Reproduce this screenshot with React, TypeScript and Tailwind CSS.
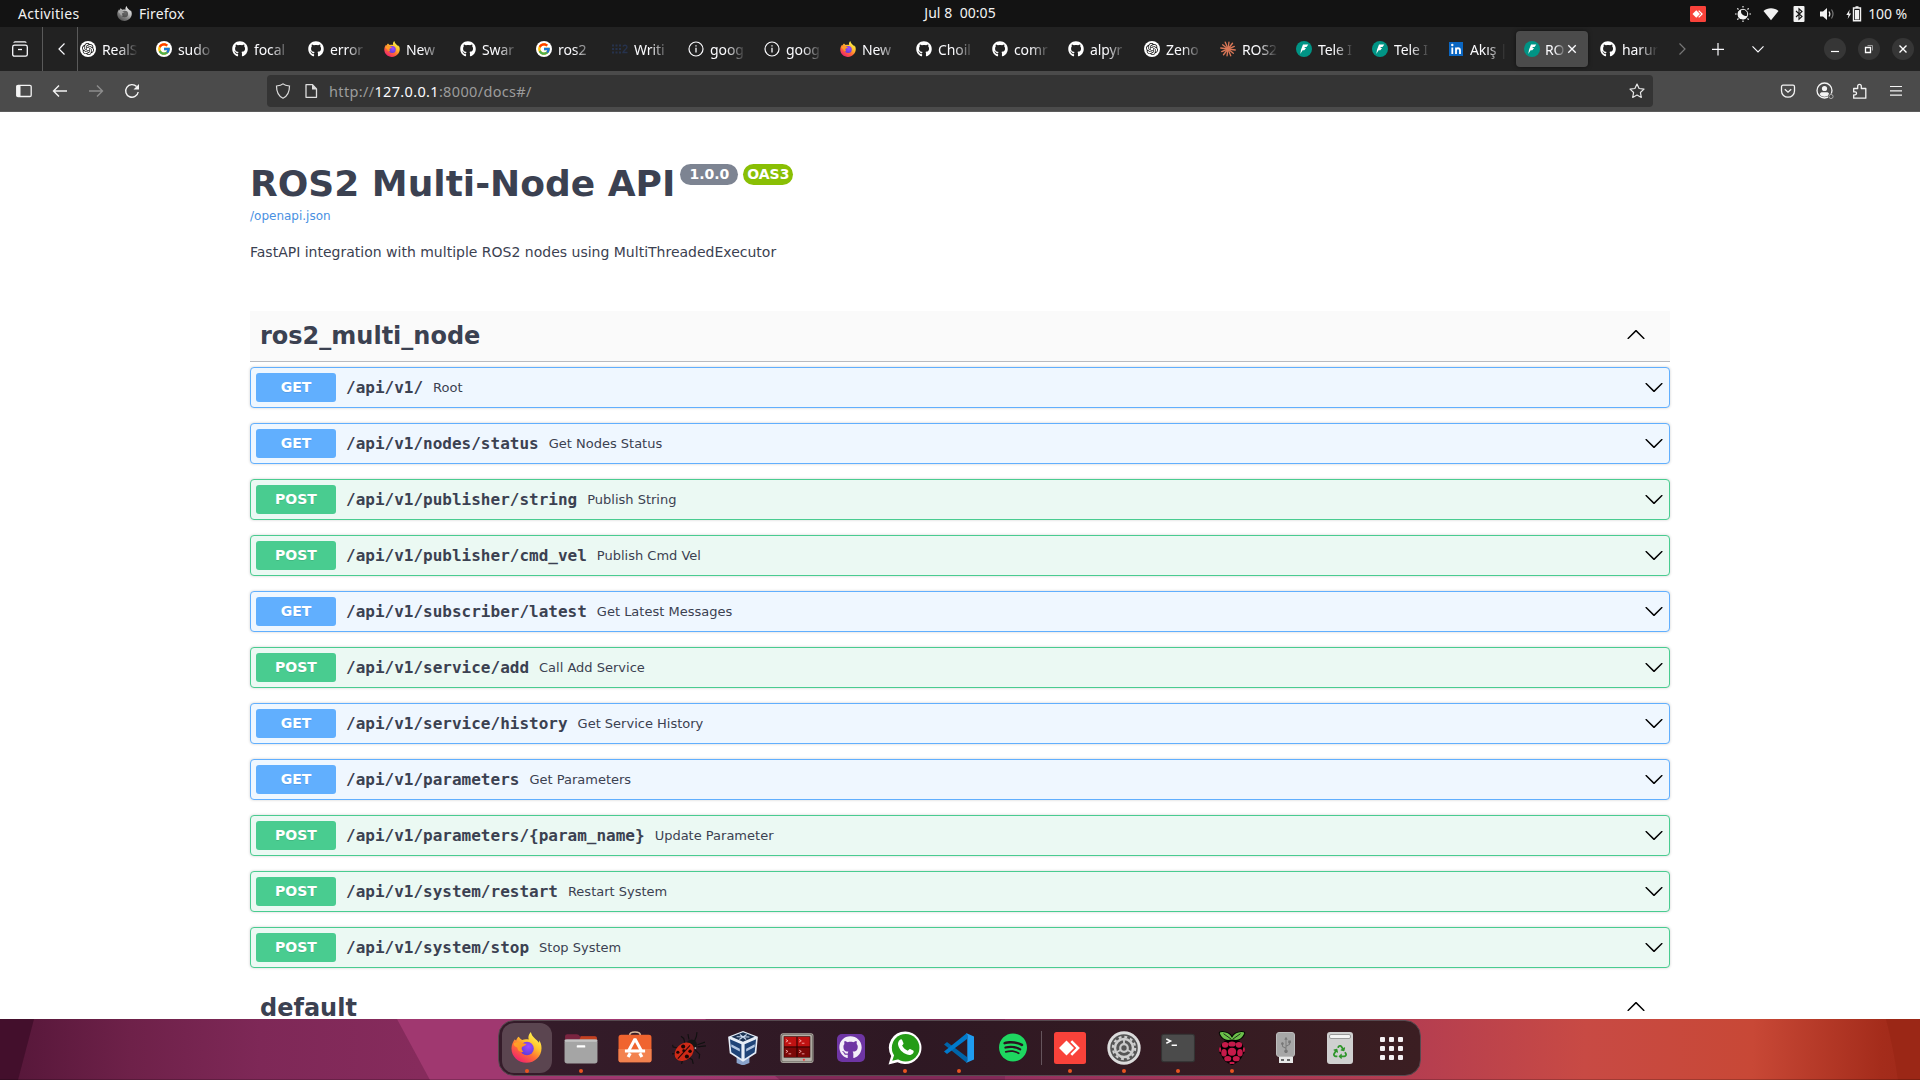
import React from "react";
import { FcGoogle } from "react-icons/fc";
import { FaGithub, FaRecycle, FaUsb } from "react-icons/fa";
import { SiOpenai, SiSpotify } from "react-icons/si";

type Kid = { children?: React.ReactNode };

const Svg = ({ s = 16, box = 16, className = "", children }: Kid & { s?: number; box?: number; className?: string }) => (
  <svg width={s} height={s} viewBox={`0 0 ${box} ${box}`} fill="none" className={`shrink-0 ${className}`}>
    {children}
  </svg>
);

/* ---------- logos ---------- */

const Firefox = ({ s, id, gray = false }: { s: number; id: string; gray?: boolean }) => (
  <Svg s={s} box={32} className={gray ? "grayscale" : ""}>
    <defs>
      <linearGradient id={`${id}a`} x1="26" y1="3" x2="8" y2="30" gradientUnits="userSpaceOnUse">
        <stop offset="0" stopColor="#fff44f" />
        <stop offset=".35" stopColor="#ffc02c" />
        <stop offset=".65" stopColor="#ff6a36" />
        <stop offset="1" stopColor="#f0256c" />
      </linearGradient>
      <radialGradient id={`${id}b`} cx=".6" cy=".35" r=".7">
        <stop offset="0" stopColor="#a04bff" />
        <stop offset="1" stopColor="#5a3bd8" />
      </radialGradient>
      <linearGradient id={`${id}c`} x1="4" y1="8" x2="18" y2="20" gradientUnits="userSpaceOnUse">
        <stop offset="0" stopColor="#ffa52b" />
        <stop offset="1" stopColor="#ff8a1c" />
      </linearGradient>
    </defs>
    <path d="M20.500 0c-2.600 2.800-3 5.500-2.200 7.800-2.500-.6-4.800-.4-6.800.4C10 7.300 8.600 6.200 8 5 6.800 5.700 5.900 7 5.300 8.800 4.600 8.500 4.200 8 4 7.500 2.300 9.800 .5 13.300 .5 17 .5 25.300 7.500 31.800 16 31.800S31.500 25 31.500 16.700c0-3.400-1-6.300-2.600-8.200.2 1 .2 1.800 0 2.600C26.500 7.500 21.500 5.500 20.500 0z" fill={`url(#${id}a)`} />
    <circle cx="16.500" cy="17" r="7" fill={`url(#${id}b)`} />
    <path d="M2.500 12c2-1.500 6-2.500 9-1 1.200.8 3 1 4.500 1-.6 2.300-3.800 2.300-4.600 3.500-.9 1.300-.4 3.500 1.300 4.800-3.300 1-6-1-6.200-4.300-1.500-.8-3-1-4-4z" fill={`url(#${id}c)`} />
  </Svg>
);

const OpenAiTab = () => (
  <span className="flex size-4 items-center justify-center rounded-full bg-white text-[#111]">
    <SiOpenai size={12} />
  </span>
);

const GoogleTab = () => (
  <span className="flex size-4 items-center justify-center rounded-full bg-white">
    <FcGoogle size={14} />
  </span>
);

const Fast = () => (
  <Svg>
    <circle cx="8" cy="8" r="8" fill="#009485" />
    <path d="M7 3.500h5.300L10.500 6H8.800l-.3.900h1.600L8.300 9.300H6.600L4.300 13 5 8.800z" fill="#fff" />
  </Svg>
);

const Claude = () => (
  <Svg>
    <g stroke="#d97757" strokeWidth="1.350" strokeLinecap="round">
      {Array.from({ length: 12 }, (_, i) => (
        <line key={i} x1="8" y1="8" x2="8" y2={i % 2 ? 0.7 : 1.2} transform={`rotate(${i * 30 + 8} 8 8)`} />
      ))}
    </g>
  </Svg>
);

const Info = () => (
  <Svg>
    <circle cx="8" cy="8" r="7" stroke="#fbfbfe" strokeWidth="1.200" />
    <path d="M8 6.800v4.700M8 4.200v1.300" stroke="#fbfbfe" strokeWidth="1.300" />
  </Svg>
);

const LinkedIn = () => (
  <Svg>
    <rect x="1" y="1" width="14" height="14" fill="#0a66c2" />
    <path d="M4.300 6.500V13M8 13V6.500M8 13V9.500c0-3 4-3 4 0V13" stroke="#fff" strokeWidth="1.800" />
    <circle cx="4.300" cy="4" r="1.200" fill="#fff" />
  </Svg>
);

const Ros = () => (
  <Svg>
    <g fill="#26324c">
      {[0, 3.5, 7].map((x) => [3.5, 7, 10.5].map((y) => <rect key={`${x}-${y}`} x={x} y={y} width="2" height="2" />))}
    </g>
    <path d="M11 5.500c.4-1.800 4-1.800 4 .4 0 2-3.500 3.300-4 5.600h4.500" stroke="#26324c" strokeWidth="1.400" />
  </Svg>
);

const AnyDesk = ({ s }: { s: number }) => (
  <Svg s={s} box={32}>
    <rect width="32" height="32" rx="2.500" fill="#f9423a" />
    <path d="M12.500 8.500 20 16l-7.500 7.500L5 16z" fill="#fff" />
    <path d="m18.200 8.300 7.700 7.700-7.700 7.700-1.800-1.800 5.900-5.900-5.900-5.900z" fill="#fff" />
  </Svg>
);

/* ---------- system bar ---------- */

const TopBar = () => (
  <div className="flex h-[27px] items-center bg-[#131313] text-[14px] text-[#f2f2f2]">
    <div className="flex w-[462px] items-center pl-[18px]">
      <span className="w-[99px] tracking-[0.32px]">Activities</span>
      <Firefox s={15} id="ft" gray />
      <span className="ml-[7px] tracking-[0.1px]">Firefox</span>
    </div>
    <div className="flex flex-1 justify-center whitespace-pre pb-[2px]">
      <span className="tracking-[0.05px]">Jul 8  00:05</span>
    </div>
    <div className="flex w-[462px] items-center justify-end pr-[13px]">
      <span className="mr-[29px]"><AnyDesk s={16} /></span>
      <Svg className="mr-[12px]">
        <path d="M8 0v1.600M8 14.400V16M0 8h1.600M14.400 8H16M2.300 2.300l1.200 1.200M12.500 12.500l1.200 1.200M2.300 13.700l1.200-1.200M12.500 3.500l1.200-1.200" stroke="#f2f2f2" strokeWidth="1.200" />
        <circle cx="8" cy="8" r="4.700" stroke="#f2f2f2" />
        <path d="M6.500 3.500A5 5 0 1 0 12.500 9.500 4.500 4.500 0 0 1 6.500 3.500z" fill="#f2f2f2" />
      </Svg>
      <Svg className="mr-[12px]"><path d="M8 14.300.5 5C4.500 1.300 11.500 1.300 15.500 5z" fill="#f2f2f2" /></Svg>
      <Svg className="mr-[12px]">
        <rect x="2.500" width="11" height="16" rx="1" fill="#f2f2f2" />
        <path d="m5 5 6 5.500-3 2.700V2.800L11 5.500 5 11" stroke="#131313" strokeWidth="1.100" />
      </Svg>
      <Svg className="mr-[11px]">
        <path d="M1 5.500h3L8 2v12l-4-3.500H1z" fill="#f2f2f2" />
        <path d="M10 5.500q1.700 2.500 0 5" stroke="#f2f2f2" strokeWidth="1.200" />
        <path d="M12.500 3.500q3 4.500 0 9" stroke="#777" strokeWidth="1.200" />
      </Svg>
      <Svg className="mr-[6px]">
        <path d="M3.700 3.500.3 9h2.200L1.700 13l3.400-5.500H3z" fill="#f2f2f2" />
        <path d="M7.500 2h7v12.800h-7zM9.500 1h3" stroke="#f2f2f2" strokeWidth="1.400" />
        <rect x="9" y="4" width="4" height="9.500" fill="#f2f2f2" />
      </Svg>
      <span className="tracking-[-0.1px]">100 %</span>
    </div>
  </div>
);

/* ---------- browser chrome ---------- */

const gh = <FaGithub size={16} color="#fff" />;
const tabs: [React.ReactNode, string][] = [
  [<OpenAiTab />, "RealS"],
  [<GoogleTab />, "sudo"],
  [gh, "focal"],
  [gh, "error"],
  [<Firefox s={16} id="f1" />, "New"],
  [gh, "Swar"],
  [<GoogleTab />, "ros2"],
  [<Ros />, "Writi"],
  [<Info />, "goog"],
  [<Info />, "goog"],
  [<Firefox s={16} id="f2" />, "New"],
  [gh, "Choil"],
  [gh, "comr"],
  [gh, "alpyr"],
  [<OpenAiTab />, "Zeno"],
  [<Claude />, "ROS2"],
  [<Fast />, "Tele I"],
  [<Fast />, "Tele I"],
  [<LinkedIn />, "Akış |"],
  [<Fast />, "RO"],
  [gh, "harur"],
];

const Fade = ({ children, className }: Kid & { className: string }) => (
  <span className={`whitespace-nowrap [mask-image:linear-gradient(to_right,#000_45%,transparent)] ${className}`}>{children}</span>
);

const TabBar = () => (
  <div className="flex h-11 items-center bg-[#222] text-[14px] text-[#fbfbfe]">
    <div className="flex h-full w-[43px] items-center justify-center border-r border-[#5a5a5a] pr-[2px]">
      <Svg>
        <path d="M2 1.800C2 1.200 2.400.9 3 .9h10c.6 0 1 .3 1 .9" stroke="#fbfbfe" strokeWidth="1.300" />
        <rect x=".7" y="4.200" width="14.600" height="11" rx="1.800" stroke="#fbfbfe" strokeWidth="1.300" />
        <path d="M6 8.500h4" stroke="#fbfbfe" strokeWidth="1.300" />
      </Svg>
    </div>
    <div className="flex h-full w-[35px] items-center justify-center border-r border-[#5a5a5a] pl-[3px]">
      <Svg><path d="M10.500 2.500 5 8l5.500 5.500" stroke="#fbfbfe" strokeWidth="1.200" /></Svg>
    </div>
    <div className="-ml-[6px] flex w-[1596px] gap-1">
      {tabs.map(([icon, t], i) => (
        <div key={i} className={`flex h-9 w-[72px] shrink-0 items-center rounded pl-2 ${i === 19 ? "bg-[#4b4b4b] shadow-[0_0_4px_rgba(0,0,0,0.5)]" : ""}`}>
          <span className="flex size-4 items-center justify-center">{icon}</span>
          <Fade className={`pt-[2px] leading-6 ${i === 19 ? "ml-[5px] w-[21px] tracking-[-0.2px]" : "ml-[6px] w-[36px] tracking-[-0.1px]"}`}>{t}</Fade>
          {i === 19 && <Svg s={12}><path d="m3 3 10 10M13 3 3 13" stroke="#fbfbfe" strokeWidth="1.800" /></Svg>}
        </div>
      ))}
    </div>
    <div className="flex w-[28px] justify-center"><Svg><path d="M5.500 2.500 11 8l-5.500 5.500" stroke="#777" strokeWidth="1.200" /></Svg></div>
    <div className="flex w-[44px] justify-center"><Svg><path d="M8 2v12.500M2 8.300h12" stroke="#fbfbfe" strokeWidth="1.200" /></Svg></div>
    <div className="flex w-[36px] justify-center"><Svg><path d="M2.500 5.300 8 10.800l5.500-5.500" stroke="#fbfbfe" strokeWidth="1.200" /></Svg></div>
    <div className="ml-auto flex gap-3 pr-[6px]">
      <span className="flex size-[22px] items-center justify-center rounded-full bg-[#363636]"><Svg><path d="M4 10.500h8" stroke="#fff" strokeWidth="1.200" /></Svg></span>
      <span className="flex size-[22px] items-center justify-center rounded-full bg-[#363636]">
        <Svg><path d="M4.500 6.500h5v5h-5z" stroke="#fff" strokeWidth="1.300" /><path d="M6.500 4.500h5v5" stroke="#999" /></Svg>
      </span>
      <span className="flex size-[22px] items-center justify-center rounded-full bg-[#363636]"><Svg><path d="m4.500 4.500 7 7M11.500 4.500l-7 7" stroke="#fff" strokeWidth="1.400" /></Svg></span>
    </div>
  </div>
);

const ink = "#f4f4f4";

const NavBar = () => (
  <div className="flex h-[41px] items-center border-b border-[#5c5c5c] bg-[#4b4b4b]">
    <div className="flex w-[267px] items-center gap-5 pl-4">
      <Svg><rect x=".8" y="2.300" width="14.400" height="11.200" rx="1.300" stroke={ink} strokeWidth="1.300" /><path d="M.5 2.500h4v11h-4z" fill={ink} /></Svg>
      <Svg><path d="M15 8H1.800M7 2.500 1.500 8 7 13.500" stroke={ink} strokeWidth="1.400" /></Svg>
      <Svg><path d="M1 8h13.200M9 2.500 14.500 8 9 13.500" stroke="#8d8d8d" strokeWidth="1.400" /></Svg>
      <Svg><path d="M14.200 9A6.300 6.300 0 1 1 12.600 3.600" stroke={ink} strokeWidth="1.400" /><path d="M15 1v5.500H9.500z" fill={ink} /></Svg>
    </div>
    <div className="flex h-8 w-[1386px] items-center rounded bg-[#343434] pl-2">
      <Svg><path d="M8 .9C6.500 2.200 4 2.800 1.500 3c0 5.500 1.500 10 6.500 12.200C13 13 14.500 8.500 14.500 3 12 2.800 9.500 2.200 8 .9z" stroke="#ddd" strokeWidth="1.200" /></Svg>
      <Svg className="ml-3"><path d="M3 1.700h6.500L13.500 6v8.300H3z" stroke="#ddd" strokeWidth="1.300" strokeLinejoin="round" /><path d="M9 1.500V6.500h5z" fill="#ddd" /></Svg>
      <span className="ml-[10px] pt-[2px] text-[14.500px] tracking-[0.34px] text-[#9c9c9c]">http://<span className="text-[#fbfbfe]">127.0.0.1</span>:8000/docs#/</span>
      <Svg className="ml-auto mr-2"><path d="m8 1 2.100 4.500 4.900.6-3.600 3.400.9 4.900L8 12l-4.300 2.400.9-4.900L1 6.100l4.900-.6z" stroke="#e8e8e8" strokeWidth="1.200" strokeLinejoin="round" /></Svg>
    </div>
    <div className="ml-auto flex items-center gap-5 pr-4">
      <Svg><path d="M3 2.200h10c.9 0 1.500.6 1.500 1.500V8c0 3.500-3 6.200-6.500 6.200S1.500 11.500 1.500 8V3.700c0-.9.600-1.500 1.500-1.500z" stroke={ink} strokeWidth="1.300" /><path d="m4.800 6.200 3.200 3 3.200-3" stroke={ink} strokeWidth="1.300" /></Svg>
      <Svg s={18} box={18}>
        <circle cx="8.500" cy="8.500" r="7.500" stroke={ink} strokeWidth="1.300" />
        <circle cx="8.500" cy="6.500" r="2.600" fill={ink} />
        <path d="M3.800 12.500c0-1.600 1.500-2.200 2.500-2.200h4.400c1 0 2.500.6 2.500 2.200-2.500 3-7 3-9.400 0z" fill={ink} />
        <circle cx="15" cy="14.500" r="3" fill="#4b4b4b" />
        <circle cx="15" cy="14.500" r="2.100" stroke="#aaa" />
      </Svg>
      <Svg className="ml-[-2px]"><path d="M1.700 15.200v-3.400h1.500c1.800 0 1.800-2.900 0-2.900H1.700V5.500h4V3.300c0-2.600 3.600-2.600 3.600 0v2.200h4.500v9.700z" stroke={ink} strokeWidth="1.300" strokeLinejoin="round" /></Svg>
      <Svg><path d="M2 3.500h12M2 7.800h12M2 12.100h12" stroke={ink} strokeWidth="1.200" /></Svg>
    </div>
  </div>
);

/* ---------- API page ---------- */

type Operation = ["GET" | "POST", string, string];

const ops: Operation[] = [
  ["GET", "/api/v1/", "Root"],
  ["GET", "/api/v1/nodes/status", "Get Nodes Status"],
  ["POST", "/api/v1/publisher/string", "Publish String"],
  ["POST", "/api/v1/publisher/cmd_vel", "Publish Cmd Vel"],
  ["GET", "/api/v1/subscriber/latest", "Get Latest Messages"],
  ["POST", "/api/v1/service/add", "Call Add Service"],
  ["GET", "/api/v1/service/history", "Get Service History"],
  ["GET", "/api/v1/parameters", "Get Parameters"],
  ["POST", "/api/v1/parameters/{param_name}", "Update Parameter"],
  ["POST", "/api/v1/system/restart", "Restart System"],
  ["POST", "/api/v1/system/stop", "Stop System"],
];

const Arrow = ({ up = false }: { up?: boolean }) => (
  <svg width="20" height="20" viewBox="0 0 20 20" className={up ? "rotate-180" : ""}>
    <path d="M17.418 6.109c.272-.268.709-.268.979 0s.271.701 0 .969l-7.908 7.830c-.27.268-.707.268-.979 0l-7.908-7.830c-.27-.268-.27-.701 0-.969.271-.268.709-.268.979 0L10 13.250l7.418-7.141z" fill="#000" />
  </svg>
);

const Op = ({ op: [m, path, text] }: { op: Operation }) => (
  <div
    className={`mb-[15px] flex h-[41px] items-center rounded border px-[5px] shadow-[0_0_3px_rgba(0,0,0,0.19)] ${
      m === "GET" ? "border-[#61affe] bg-[#eff7ff]" : "border-[#49cc90] bg-[#ebf9f3]"
    }`}
  >
    <span
      className={`flex h-[29px] w-20 items-center justify-center rounded-[3px] text-[14px] font-bold text-white [text-shadow:0_1px_0_rgba(0,0,0,0.1)] ${
        m === "GET" ? "bg-[#61affe]" : "bg-[#49cc90]"
      }`}
    >
      {m}
    </span>
    <span className="ml-[10px] font-['DejaVu_Sans_Mono',monospace] text-base font-bold">{path}</span>
    <span className="ml-[10px] text-[13px]">{text}</span>
    <span className="ml-auto pb-[2px]"><Arrow /></span>
  </div>
);

const Docs = () => (
  <main className="h-[907px] overflow-hidden bg-white font-['DejaVu_Sans',sans-serif] text-[#3b4151]">
    <div className="mx-auto w-[1420px] pt-[50px]">
      <div className="flex h-[42px] items-start">
        <h1 className="whitespace-nowrap text-[36px] font-bold leading-[44px]">ROS2 Multi-Node API</h1>
        <span className="ml-[5px] mt-[2px] flex h-[21px] w-[58px] items-center justify-center rounded-full bg-[#7d8492] text-[14px] font-bold text-white">1.0.0</span>
        <span className="ml-[5px] mt-[2px] flex h-[21px] w-[50px] items-center justify-center rounded-full bg-[#89bf04] text-[14px] font-bold text-white">OAS3</span>
      </div>
      <p className="mt-[3px] text-[12px] leading-[18px] text-[#4990e2]">/openapi.json</p>
      <p className="mt-[18px] text-[14px] leading-[18px]">FastAPI integration with multiple ROS2 nodes using MultiThreadedExecutor</p>
      <div className="mt-[50px] flex h-[51px] items-center border-b border-[#b9bbc0] bg-[#fafafa] pl-[10px] pr-6">
        <h2 className="text-2xl font-bold">ros2_multi_node</h2>
        <span className="ml-auto pb-[2px]"><Arrow up /></span>
      </div>
      <div className="pt-[5px]">
        {ops.map((o) => <Op key={o[1]} op={o} />)}
      </div>
      <div className="flex h-[50px] items-center pl-[10px] pr-6">
        <h2 className="text-2xl font-bold">default</h2>
        <span className="ml-auto pb-[2px]"><Arrow up /></span>
      </div>
    </div>
  </main>
);

/* ---------- dock ---------- */

const Files = () => (
  <Svg s={34} box={32}>
    <path d="M1 5q0-2 2-2h9q2 0 3 2h14q2 0 2 2v10H1z" fill="#7a2440" />
    <path d="M16 5h13q2 0 2 2v6H12z" fill="#c2411f" />
    <rect x=".5" y="8" width="31" height="22.500" rx="2.500" fill="#a5a5a5" />
    <rect x=".5" y="8" width="31" height="2" rx="1" fill="#c3c3c3" />
    <rect x="12" y="13.500" width="8" height="2" rx=".5" fill="#fff" />
  </Svg>
);

const Software = () => (
  <Svg s={34} box={32}>
    <path d="M11 6V4q0-3 5-3t5 3v2" stroke="#d8b99c" strokeWidth="1.500" />
    <rect x=".5" y="3.500" width="31" height="26" rx="2.500" fill="#f0642f" />
    <path d="M.5 17h31v10q0 2.500-2.500 2.500H3Q.5 29.500.5 27z" fill="#f3824f" />
    <path d="M9.500 19.500 16 7.500l6.500 12" stroke="#fff" strokeWidth="2.800" strokeLinejoin="bevel" />
    <path d="M6.500 18.800h19M11.500 21l-2 3.500M20.500 21l2 3.500" stroke="#fff" strokeWidth="3" />
  </Svg>
);

const Bug = () => (
  <Svg s={34} box={32}>
    <path d="m21 10 2-5 .5-4M24 13l7-2.500M22 18l4 4-.5 4M12 11l-1-4-2.500-2M5 16l-4-1-.5-2M10 27l-1 4M16 25l3 2 1 4M16 8l-1-5M24 15l8-1M5 21l-5 .5" stroke="#111" strokeWidth="1.100" />
    <circle cx="18.500" cy="13" r="5" fill="#151515" />
    <ellipse cx="11.500" cy="19.500" rx="10" ry="7.600" transform="rotate(-42 11.500 19.500)" fill="#cf2a17" />
    <path d="M17 13.500 5.500 26" stroke="#2a0808" strokeWidth="1" />
    <g fill="#1a0505">
      <circle cx="10.500" cy="14.500" r="1.900" /><circle cx="14" cy="24" r="1.900" /><circle cx="5.500" cy="20" r="1.500" /><circle cx="17" cy="19" r="1.600" /><circle cx="11" cy="18.500" r="1.300" />
    </g>
    <circle cx="22" cy="16" r=".8" fill="#ddd" />
  </Svg>
);

const VBox = () => (
  <Svg s={34} box={32}>
    <path d="M10 24h12v6l-6 2.500-6-2.500z" fill="#8aa3cc" />
    <path d="M16 0 30 5.500 28.500 21 16 29 3.500 21 2 5.500z" fill="#e6eef8" />
    <path d="m16 1.200 11 4.200-11 4.800L5 5.400z" fill="#1b3253" />
    <path d="m3.700 7.800 10.800 4.700V26L5 20zM28.300 7.800l-10.800 4.700V26l9.500-6z" fill="#1f4478" />
    <path d="m10 5.500 12 .2M13 3.300l6 4.700M19.500 3.300 12.500 8" stroke="#c9d8ee" />
    <path d="m5 12.500 8 4.200v2.500L5 15zM27 12.500l-8 4.200v2.500l8-4.200z" fill="#b4c8e4" />
  </Svg>
);

const Terminator = () => (
  <Svg s={34} box={32}>
    <rect x=".5" y="2" width="31" height="28" rx="2.500" fill="#b5b1a9" />
    <rect x="1.500" y="3" width="29" height="26" rx="2" stroke="#77736c" />
    <rect x="3.500" y="5" width="25" height="20" fill="#2a0000" />
    <rect x="4" y="5.500" width="11.500" height="9" fill="#c01212" /><rect x="16.500" y="5.500" width="11.500" height="9" fill="#c01212" />
    <rect x="4" y="15.500" width="11.500" height="9" fill="#7c0808" /><rect x="16.500" y="15.500" width="11.500" height="9" fill="#7c0808" />
    <path d="m5.500 8 2 1.200-2 1.200M8 11.500h2.500M18 8l2 1.200-2 1.200M20.500 11.500H23M5.500 18l2 1.200-2 1.200M8 21.500h2.500M18 18l2 1.200-2 1.200M20.500 21.500H23" stroke="#ffb4b4" strokeWidth=".8" />
    <circle cx="22.500" cy="27" r="1" fill="#f33" />
  </Svg>
);

const WhatsApp = () => (
  <Svg s={34} box={32}>
    <path d="M16.500.5A15.300 15.300 0 1 1 9 29.300L.5 31.500 3 23.500A15.300 15.300 0 0 1 16.500.5z" fill="#fff" />
    <circle cx="16.600" cy="15.800" r="13" fill="#259c16" />
    <path d="M4 28l2-6 4 4.500z" fill="#259c16" />
    <path d="M11 8.500c1-1 2-.8 2.400.1l1.200 2.900c.2.700-.8 1.600-1.300 2.200 1.300 2.500 3 4 5.300 4.900.7-.6 1.500-2 2.200-1.700l2.900 1.500c.8.400.5 1.700-.1 2.500-1.300 1.700-3.600 2-5.600 1.300C13.500 20.700 10.200 17 9.500 13c-.3-1.700.3-3.300 1.500-4.500z" fill="#fff" />
  </Svg>
);

const Code = () => (
  <Svg s={32} box={32}>
    <path d="m1 12.500 3-2.500L24 25v6z" fill="#0065a9" />
    <path d="m1 19.500 3 2.500L24 7V1z" fill="#007acc" />
    <path d="m23 1 8 3.500v23L23 31q1.300-.8 1.300-2.500v-25Q24.300 1.800 23 1z" fill="#1f9cf0" />
  </Svg>
);

const Settings = () => (
  <Svg s={34} box={32}>
    <circle cx="16" cy="16" r="15.700" fill="#dcdcdc" />
    <circle cx="16" cy="16" r="13" fill="#555" />
    <circle cx="16" cy="16" r="8.500" stroke="#cfcfcf" strokeWidth="2.400" />
    <circle cx="16" cy="16" r="10.500" stroke="#cfcfcf" strokeWidth="2" strokeDasharray="2.750 2.750" />
    <circle cx="16" cy="16" r="4.600" fill="#c9c9c9" />
    <path d="M16 16V8M16 16l-7 4M16 16l7 4" stroke="#c9c9c9" strokeWidth="1.800" />
    <circle cx="16" cy="16" r="2.500" fill="#555" />
  </Svg>
);

const Terminal = () => (
  <Svg s={34} box={32}>
    <rect x=".5" y="3" width="31" height="26" rx="2.500" fill="#4b4b4b" stroke="#333" />
    <path d="m5 7.500 4 2-4 2M10 13.500h5" stroke="#fff" strokeWidth="1.400" />
  </Svg>
);

const berries: [number, number, number, number][] = [
  [16, 12.2, 3.6, 2.4], [9.5, 13, 3, 2.7], [22.5, 13, 3, 2.7], [16, 19.5, 3.9, 3.7], [8.5, 20.5, 2.6, 3.5], [23.5, 20.5, 2.6, 3.5], [12, 26, 3.3, 2.4], [20, 26, 3.3, 2.4], [16, 30, 2.6, 1.1], [4.8, 17.5, 1, 2.4], [27.2, 17.5, 1, 2.4],
];

const Raspberry = () => (
  <Svg s={34} box={32}>
    <path d="M16 8.500C12 10 6 8.500 4 2 3.500-.2 13-.5 16 5.500 19-.5 28.500-.2 28 2c-2 6.500-8 8-12 6.500z" fill="#6cc04a" stroke="#000" />
    <path d="m8 2.500 7 5M24 2.500l-7 5" stroke="#111" strokeWidth=".8" />
    <path d="M16 8.500c5-1 10 2 10.500 6 3 3 1.500 6.500-.5 8-1 5-6 8-10 9.500-4-1.500-9-4.500-10-9.500-2-1.500-3.500-5-.5-8 .5-4 5.500-7 10.500-6z" fill="#000" />
    {berries.map(([x, y, rx, ry], i) => <ellipse key={i} cx={x} cy={y} rx={rx} ry={ry} fill="#c51a4a" />)}
  </Svg>
);

const Usb = () => (
  <span className="flex flex-col items-center">
    <span className="flex h-[25px] w-[19px] items-center justify-center rounded-[3px] border border-[#bdbdbd] bg-[#a7a7a7] text-[#777]">
      <FaUsb size={16} className="-rotate-90" />
    </span>
    <span className="flex h-[6px] w-[14px] items-center justify-center gap-[3px] bg-[#e8e8e8]">
      <i className="h-[2px] w-[3px] bg-[#666]" /><i className="h-[2px] w-[3px] bg-[#666]" />
    </span>
  </span>
);

const Trash = () => (
  <span className="flex h-[32px] w-[26px] flex-col items-center rounded-[3px] bg-[#d0d0d0]">
    <span className="mt-[2px] h-[5px] w-[22px] rounded-[2px] border border-[#999] bg-[#f4f4f4]" />
    <FaRecycle size={14} color="#2f962b" className="mt-[6px]" />
  </span>
);

const Grid = () => (
  <span className="grid grid-cols-3 gap-[4px]">
    {Array.from({ length: 9 }, (_, i) => <i key={i} className="size-[5px] rounded-[1px] bg-[#f4f0f2]" />)}
  </span>
);

const left: [React.ReactNode, boolean][] = [
  [<Firefox s={31} id="fd" />, true],
  [<Files />, true],
  [<Software />, false],
  [<Bug />, false],
  [<VBox />, false],
  [<Terminator />, false],
  [<span className="flex size-7 items-center justify-center rounded-[5px] bg-[#6e35a3]"><FaGithub size={23} color="#f3eef8" /></span>, false],
  [<WhatsApp />, true],
  [<Code />, true],
  [<span className="flex size-7 items-center justify-center rounded-full bg-[#2a1420]"><SiSpotify size={29} color="#1ed760" /></span>, false],
];

const right: [React.ReactNode, boolean][] = [
  [<AnyDesk s={32} />, true],
  [<Settings />, true],
  [<Terminal />, true],
  [<Raspberry />, true],
  [<Usb />, false],
  [<Trash />, false],
];

const DockItem = ({ icon, dot, active = false }: { icon: React.ReactNode; dot: boolean; active?: boolean }) => (
  <div className="flex w-[54px] shrink-0 justify-center">
    <div className={`relative flex size-[50px] items-center justify-center rounded-xl pb-px ${active ? "bg-[#5b4550]" : ""}`}>
      {icon}
      {dot && <span className="absolute bottom-0 left-[23px] size-[4.5px] rounded-full bg-[#e95420]" />}
    </div>
  </div>
);

const Dock = () => (
  <div className="relative flex h-[61px] justify-center bg-[linear-gradient(90deg,#541638_0px,#6e2149_130px,#7e2857_260px,#862b5c_420px)] pr-[2px]">
    <svg width="1920" height="61" className="absolute inset-0" preserveAspectRatio="none">
      <defs>
        <linearGradient id="wall" gradientUnits="userSpaceOnUse" x1="397" y1="0" x2="1920" y2="30">
          <stop offset="0" stopColor="#a03870" />
          <stop offset=".2" stopColor="#a03870" />
          <stop offset=".4" stopColor="#943060" />
          <stop offset=".67" stopColor="#b53e50" />
          <stop offset=".78" stopColor="#c84a44" />
          <stop offset=".89" stopColor="#c84836" />
          <stop offset=".975" stopColor="#a42c1b" />
          <stop offset="1" stopColor="#9e2919" />
        </linearGradient>
      </defs>
      <path d="M0 0h34L18 61H0z" fill="#430f2c" />
      <path d="M397 0h1523v61H430z" fill="url(#wall)" />
      <path d="M705 0h300v61H780z" fill="#822a58" />
      <path d="M1886 0h34v61h-22q-4-30-12-61z" fill="#9b2716" />
      <path d="M0 60.500h1920" stroke="#000" strokeOpacity=".2" />
    </svg>
    <div className="relative mt-px flex h-[56px] w-[923px] items-center rounded-[16px] border border-[#574a50] bg-[linear-gradient(90deg,#351c2a,#2e1823_45%,#3b1e22)] pl-px">
      {left.map(([icon, dot], i) => <DockItem key={i} icon={icon} dot={dot} active={i === 0} />)}
      <span className="mx-px h-[34px] w-px bg-[#65545c]" />
      {right.map(([icon, dot], i) => <DockItem key={i} icon={icon} dot={dot} />)}
      <span className="flex w-[50px] justify-center"><Grid /></span>
    </div>
  </div>
);

export default function App() {
  return (
    <div className="h-[1080px] w-[1920px] overflow-hidden font-['Noto_Sans',sans-serif]">
      <TopBar />
      <TabBar />
      <NavBar />
      <Docs />
      <Dock />
    </div>
  );
}
